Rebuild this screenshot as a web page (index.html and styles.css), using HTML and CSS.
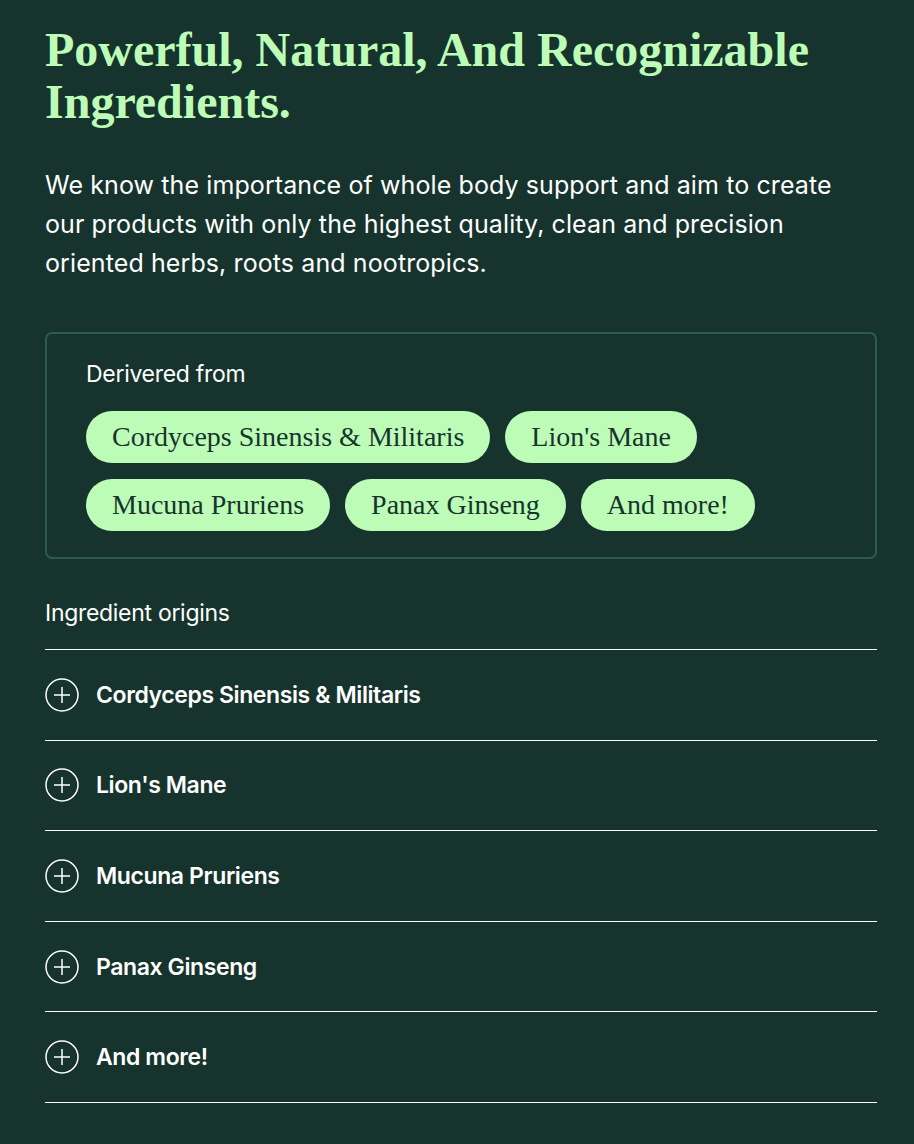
FILE: index.html
```html
<!DOCTYPE html>
<html>
<head>
	<title>Ingredients</title>
	<meta charset="utf-8">
	<meta name="viewport" content="width=device-width, initial-scale=1">
	<link rel="stylesheet" href="styles.css">
</head>
<body>

	<section class="ingredients">
		<h1 class="title">Powerful, Natural, And Recognizable Ingredients.</h1>

		<p class="intro">We know the importance of whole body support and aim to create our products with only the highest quality, clean and precision oriented herbs, roots and nootropics.</p>

		<div class="derived">
			<p class="label">Derivered from</p>
			<ul class="pills">
				<li>Cordyceps Sinensis &amp; Militaris</li>
				<li>Lion's Mane</li>
				<li>Mucuna Pruriens</li>
				<li>Panax Ginseng</li>
				<li>And more!</li>
			</ul>
		</div>

		<p class="label origins-label">Ingredient origins</p>

		<div class="accordion">
			<button class="row">
				<svg class="plus" viewBox="0 0 34 34"><circle cx="17" cy="17" r="16"/><path d="M17 9v16M9 17h16"/></svg>
				Cordyceps Sinensis &amp; Militaris
			</button>
			<button class="row">
				<svg class="plus" viewBox="0 0 34 34"><circle cx="17" cy="17" r="16"/><path d="M17 9v16M9 17h16"/></svg>
				Lion's Mane
			</button>
			<button class="row">
				<svg class="plus" viewBox="0 0 34 34"><circle cx="17" cy="17" r="16"/><path d="M17 9v16M9 17h16"/></svg>
				Mucuna Pruriens
			</button>
			<button class="row">
				<svg class="plus" viewBox="0 0 34 34"><circle cx="17" cy="17" r="16"/><path d="M17 9v16M9 17h16"/></svg>
				Panax Ginseng
			</button>
			<button class="row">
				<svg class="plus" viewBox="0 0 34 34"><circle cx="17" cy="17" r="16"/><path d="M17 9v16M9 17h16"/></svg>
				And more!
			</button>
		</div>
	</section>

</body>
</html>
```

FILE: styles.css
```css
*,
*:before,
*:after {
	box-sizing: border-box;
}

body {
	margin: 0;
	background-color: #16342d;
	color: #ffffff;
	font-family: Inter, "Liberation Sans", Arial, sans-serif;
}

.ingredients {
	padding: 24px 37px 40px 45px;
}

.title {
	margin: 0;
	color: #bdfcb6;
	font-family: "Liberation Serif", "Times New Roman", serif;
	font-size: 48px;
	font-weight: bold;
	line-height: 52px;
}

.intro {
	margin: 38px 0 0;
	font-size: 25px;
	line-height: 39px;
	letter-spacing: 0.1px;
}

.derived {
	margin-top: 49px;
	padding: 26px 38px 26px 39px;
	border: 2px solid #2a5d4c;
	border-radius: 7px;
}

.label {
	margin: 0;
	font-size: 23px;
	line-height: 28px;
	letter-spacing: -0.3px;
}

.pills {
	display: flex;
	flex-wrap: wrap;
	gap: 16px 15px;
	margin: 23px 0 0;
	padding: 0;
	list-style: none;
}

.pills li {
	height: 52px;
	padding: 0 26px;
	border-radius: 26px;
	background-color: #bdfcb6;
	color: #16342d;
	font-family: "Liberation Serif", "Times New Roman", serif;
	font-size: 28px;
	line-height: 52px;
}

.origins-label {
	margin-top: 40px;
	margin-bottom: 22px;
}

.accordion {
	border-top: 1px solid #ffffff;
}

.row {
	display: flex;
	align-items: center;
	gap: 17px;
	width: 100%;
	height: 90.6px;
	padding: 0;
	border: 0;
	border-bottom: 1px solid #ffffff;
	background: none;
	color: #ffffff;
	font-family: Inter, "Liberation Sans", Arial, sans-serif;
	font-size: 23px;
	font-weight: 600;
	letter-spacing: -0.4px;
	text-align: left;
	cursor: pointer;
}

.plus {
	width: 34px;
	height: 34px;
	flex: none;
	fill: none;
	stroke: #ffffff;
	stroke-width: 1.5;
}
```
